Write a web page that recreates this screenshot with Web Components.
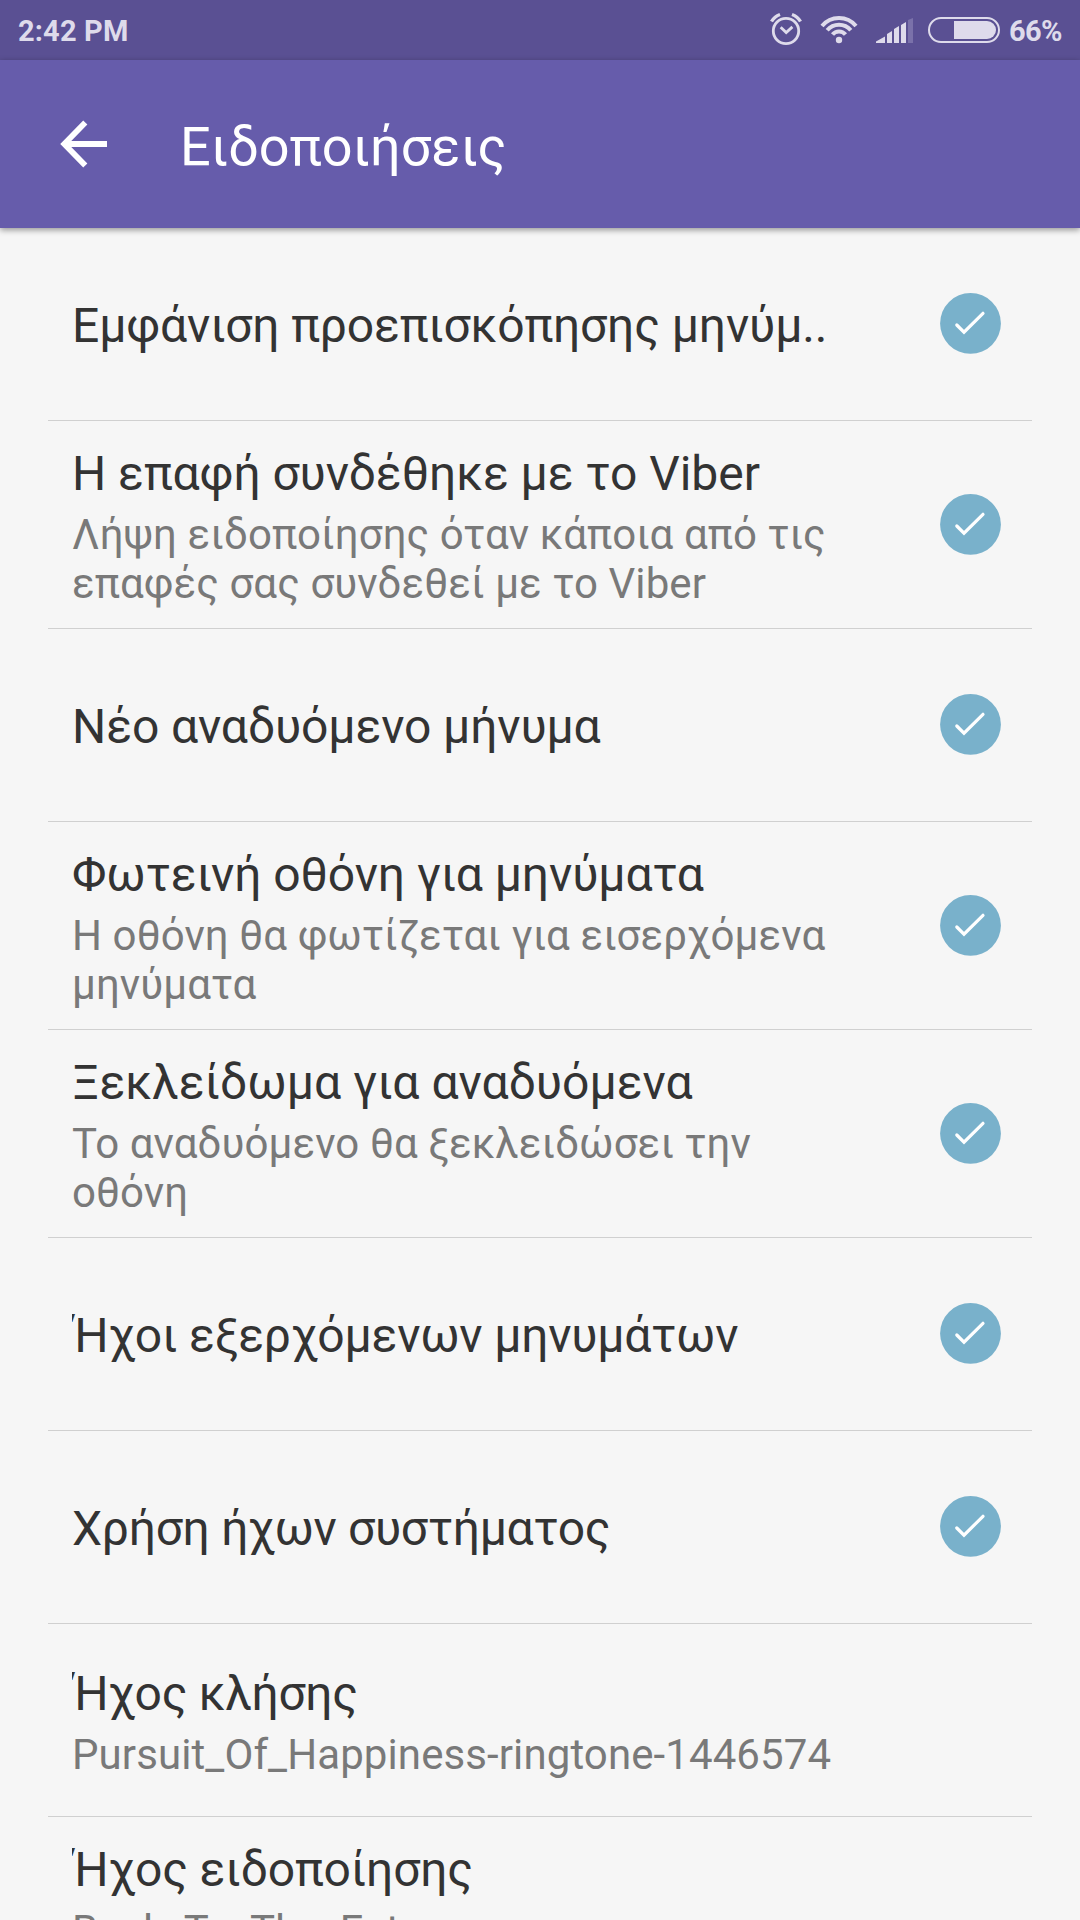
<!DOCTYPE html>
<html lang="el"><head><meta charset="utf-8"><title>Ειδοποιήσεις</title>
<style>html,body{margin:0;height:1920px;overflow:hidden;background:#f6f6f6;font-family:Roboto,"Noto Sans",sans-serif}</style></head><body>
<settings-page></settings-page>
<script>
class StatusBar extends HTMLElement{constructor(){super();this.attachShadow({mode:'open'}).innerHTML=`
<style>:host{display:flex;height:60px;box-sizing:border-box;padding-left:18px;justify-content:space-between;align-items:center;background:#5a5093;color:#dedbeb;font-size:29px;font-weight:700}
span{line-height:60px;padding-top:2px;letter-spacing:.15px}svg{display:block}.r{display:flex;align-items:center}.p{box-sizing:border-box;width:80px;padding-left:9px;letter-spacing:-.6px}</style>
<span>2:42 PM</span><div class="r"><svg width="232" height="60" viewBox="768 0 232 60" fill="none" stroke="#dedbeb">
<circle cx="786" cy="31" r="12.7" stroke-width="2.8"/><path d="M780.7 27.3l5.5 5.3 6.2-5.7" stroke-width="2.8"/><path d="M771.5 21.5q3-5 8.5-7M800.5 21.5q-3-5-8.5-7" stroke-width="3.4"/>
<path d="M822 26a22 22 0 0 1 34 0M827.200 30.2a15.3 15.3 0 0 1 23.600 0M832.5 34.600a8.400 8.400 0 0 1 13 0" stroke-width="4"/><circle cx="839" cy="40" r="3.200" fill="#dedbeb" stroke="none"/>
<g fill="#dedbeb" stroke="none"><path d="M876 43v-1.500l9-5v6.500zM887 43v-9l5-3v12zM894 43v-14l5-3v17zM901 43v-18l5-3v21z"/><path d="M908 43V20l5-2v25z" fill="#7a71aa"/></g>
<rect x="929" y="18" width="70" height="24" rx="12" stroke-width="2"/><path d="M954 21h33a9 9 0 0 1 0 18h-33z" fill="#dedbeb" stroke="none"/></svg><span class="p">66%</span></div>`}}
customElements.define('status-bar',StatusBar);
class AppBar extends HTMLElement{constructor(){super();this.attachShadow({mode:'open'}).innerHTML=`
<style>:host{display:flex;height:168px;align-items:center;background:#665cab;color:#fff;box-shadow:0 2px 6px #0006;position:relative}svg{margin:0 71px 0 59px;overflow:visible}span{font-size:54px;line-height:64px;padding-top:6px}</style>
<svg width="50" height="48" viewBox="-2.300 0 50 48" fill="none" stroke="#fff" stroke-width="5.8"><path d="M24 2.500L3 24l21 21.500M3 24h42.700"/></svg><span><slot></slot></span>`}}
customElements.define('app-bar',AppBar);
class CheckMark extends HTMLElement{constructor(){super();this.attachShadow({mode:'open'}).innerHTML=`
<style>:host{display:block;width:62px;height:62px}svg{display:block}</style><svg width="62" height="62"><circle cx="31.5" cy="30.400" r="30.400" fill="#79b1cb"/><path d="M17.800 32l7.200 7.200 19-18.900" fill="none" stroke="#fff" stroke-width="3.200" stroke-linecap="round"/></svg>`}}
customElements.define('check-mark',CheckMark);
class SettingRow extends HTMLElement{constructor(){super();this.attachShadow({mode:'open'}).innerHTML=`
<style>:host{display:flex;height:193px;box-sizing:border-box;margin:0 48px;padding:0 31px 0 24px;align-items:center;justify-content:space-between;border-bottom:1px solid #d0d0d0;color:#333}
:host([tall]){height:208px}.t{white-space:nowrap;font-size:48px;line-height:56px;letter-spacing:var(--track,0)}.t:only-child{padding-top:4px}.s{font-size:42px;line-height:49px;color:#797979;white-space:pre;margin:8px 0 -4px;letter-spacing:.1px}.x{clip-path:inset(-10px -20px -10px 0)}</style>
<div class="x"><div class="t"><slot></slot></div></div>`;}
connectedCallback(){const r=this.shadowRoot;const s=this.getAttribute('summary');if(s&&!r.querySelector('.s')){const d=document.createElement('div');d.className='s';d.textContent=s;r.querySelector('.t').parentNode.append(d)}if(!this.hasAttribute('plain')&&!r.querySelector('check-mark'))r.append(document.createElement('check-mark'))}}
customElements.define('setting-row',SettingRow);
class SettingsPage extends HTMLElement{constructor(){super();this.attachShadow({mode:'open'}).innerHTML=`
<style>:host{display:block;height:1920px;overflow:hidden}</style><status-bar></status-bar><app-bar>Ειδοποιήσεις</app-bar>
<setting-row style="--track:-.11px">Εμφάνιση προεπισκόπησης μηνύμ..</setting-row>
<setting-row style="--track:-.04px" tall summary="Λήψη ειδοποίησης όταν κάποια από τις&#10;επαφές σας συνδεθεί με το Viber">Η επαφή συνδέθηκε με το Viber</setting-row>
<setting-row style="--track:-.11px">Νέο αναδυόμενο μήνυμα</setting-row>
<setting-row style="--track:-.09px" tall summary="Η οθόνη θα φωτίζεται για εισερχόμενα&#10;μηνύματα">Φωτεινή οθόνη για μηνύματα</setting-row>
<setting-row tall summary="Το αναδυόμενο θα ξεκλειδώσει την&#10;οθόνη">Ξεκλείδωμα για αναδυόμενα</setting-row>
<setting-row style="--track:-.19px">Ήχοι εξερχόμενων μηνυμάτων</setting-row>
<setting-row style="--track:-.28px">Χρήση ήχων συστήματος</setting-row>
<setting-row style="--track:-.3px" plain summary="Pursuit_Of_Happiness-ringtone-1446574">Ήχος κλήσης</setting-row>
<setting-row style="--track:-.15px" plain tall summary="Back_To_The_Future&#10; ">Ήχος ειδοποίησης</setting-row>`}}
customElements.define('settings-page',SettingsPage);
</script></body></html>
